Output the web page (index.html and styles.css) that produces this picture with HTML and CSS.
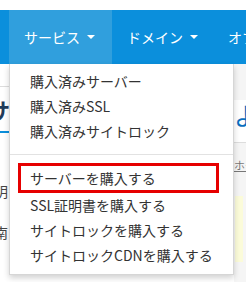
FILE: index.html
```html
<!DOCTYPE html>
<html>
    <head>
        <meta charset="utf-8">
        <link rel="stylesheet" href="styles.css">
    </head>
    <body>
        <div class="top-gap"></div>
        <div class="navbar">
            <div class="nav-item active">サービス <span class="caret"></span></div>
            <div class="nav-item">ドメイン <span class="caret"></span></div>
            <div class="nav-item">オプション</div>
        </div>
        <div class="page">
            <div class="left-col">
                <div class="left-rule"></div>
                <div class="left-title">サ</div>
                <div class="left-line first">明</div>
                <div class="left-line">南</div>
            </div>
            <div class="mid-col"></div>
            <div class="right-col">
                <div class="right-title">よ</div>
                <div class="right-link">ホーム</div>
                <div class="right-box"></div>
            </div>
        </div>
        <ul class="dropdown">
            <li>購入済みサーバー</li>
            <li>購入済みSSL</li>
            <li>購入済みサイトロック</li>
            <li class="divider"></li>
            <li class="marked">サーバーを購入する</li>
            <li>SSL証明書を購入する</li>
            <li>サイトロックを購入する</li>
            <li>サイトロックCDNを購入する</li>
        </ul>
    </body>
</html>
```

FILE: styles.css
```css
* {
    box-sizing: border-box;
}

body {
    margin: 0;
    width: 246px;
    height: 282px;
    overflow: hidden;
    position: relative;
    background: #ffffff;
    font-family: "Noto Sans CJK JP", "Noto Sans", sans-serif;
    color: #333333;
}

.top-gap {
    height: 10px;
}

.navbar {
    height: 54px;
    background: #0b8fdc;
    padding-left: 9px;
    display: flex;
    white-space: nowrap;
}

.nav-item {
    color: #ffffff;
    font-size: 14px;
    line-height: 54px;
    padding: 0 15px;
    display: flex;
    align-items: center;
    flex-shrink: 0;
}

.nav-item.active {
    background: #309fdd;
    width: 103px;
}

.caret {
    display: inline-block;
    margin-left: 7px;
    border-left: 4px solid transparent;
    border-right: 4px solid transparent;
    border-top: 4px solid #ffffff;
}

.page {
    display: flex;
    height: 218px;
}

.left-col {
    width: 9px;
    overflow: hidden;
    padding-top: 22px;
}

.left-rule {
    border-top: 1px solid #dddddd;
}

.left-title {
    font-size: 22px;
    font-weight: bold;
    line-height: 44px;
    color: #1f3a5a;
    margin-left: -12px;
    border-bottom: 2px solid #0b8fdc;
}

.left-line {
    font-size: 14px;
    color: #444444;
    margin-left: -6px;
    line-height: 20px;
    margin-top: 21px;
}

.left-line.first {
    margin-top: 48px;
}

.mid-col {
    flex: 1;
}

.right-col {
    width: 12px;
    overflow: hidden;
    background: #f5f5f5;
    padding-top: 36px;
}

.right-title {
    font-size: 24px;
    line-height: 30px;
    color: #0b6fbf;
    background: #ffffff;
    padding-bottom: 12px;
    border-bottom: 1px solid #dddddd;
}

.right-link {
    font-size: 11px;
    line-height: 16px;
    color: #777777;
    margin-top: 14px;
    white-space: nowrap;
    text-decoration: underline;
}

.right-box {
    margin-top: 23px;
    margin-left: 1px;
    width: 8px;
    height: 66px;
    background: #fbfbd9;
}

.dropdown {
    position: absolute;
    left: 9px;
    top: 64px;
    width: 225px;
    margin: 0;
    padding: 5px 0 6px;
    list-style: none;
    background: #ffffff;
    border: 1px solid #d6d6d6;
    border-top: none;
    box-shadow: 0 3px 6px rgba(0, 0, 0, 0.18);
}

.dropdown li {
    font-size: 14px;
    line-height: 25px;
    padding-left: 20px;
    color: #333333;
    white-space: nowrap;
}

.dropdown .divider {
    height: 1px;
    margin: 10px 0 8px;
    background: #e2e2e2;
}

.dropdown .marked {
    margin: 0 14px 0 8px;
    padding-left: 9px;
    border: 3px solid #e60000;
    line-height: 24px;
}
```
